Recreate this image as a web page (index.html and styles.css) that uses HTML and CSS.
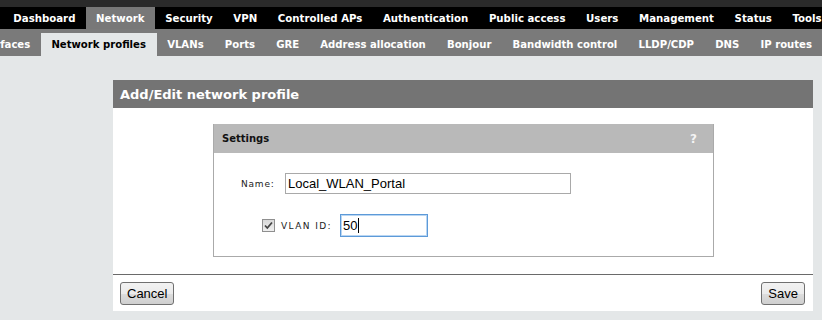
FILE: index.html
```html
<!DOCTYPE html>
<html>
<head>
<meta charset="utf-8">
<link rel="stylesheet" href="styles.css">
</head>
<body>
<div class="topstrip"></div>
<nav class="mainnav">
  <a class="item">Dashboard</a>
  <a class="item active">Network</a>
  <a class="item">Security</a>
  <a class="item">VPN</a>
  <a class="item">Controlled APs</a>
  <a class="item">Authentication</a>
  <a class="item">Public access</a>
  <a class="item">Users</a>
  <a class="item">Management</a>
  <a class="item">Status</a>
  <a class="item">Tools</a>
</nav>
<nav class="subnav">
  <div class="subtrack">
    <a class="sitem">Interfaces</a>
    <a class="sitem active">Network profiles</a>
    <a class="sitem">VLANs</a>
    <a class="sitem">Ports</a>
    <a class="sitem">GRE</a>
    <a class="sitem">Address allocation</a>
    <a class="sitem">Bonjour</a>
    <a class="sitem">Bandwidth control</a>
    <a class="sitem">LLDP/CDP</a>
    <a class="sitem">DNS</a>
    <a class="sitem">IP routes</a>
  </div>
</nav>
<main class="page">
  <section class="card">
    <header class="card-head">Add/Edit network profile</header>
    <div class="card-body">
      <div class="panel">
        <div class="panel-head"><span>Settings</span><span class="help">?</span></div>
        <div class="panel-body">
          <div class="row row-name">
            <label class="lbl">Name:</label>
            <div class="input input-name">Local_WLAN_Portal</div>
          </div>
          <div class="row row-vlan">
            <span class="check"><svg width="11" height="11" viewBox="0 0 11 11"><path d="M2 5.5 L4.3 8 L9 2.5" fill="none" stroke="#444" stroke-width="1.8"/></svg></span>
            <label class="lbl">VLAN ID:</label>
            <div class="input input-vlan">50<span class="caret"></span></div>
          </div>
        </div>
      </div>
    </div>
    <div class="card-foot">
      <button class="btn">Cancel</button>
      <button class="btn">Save</button>
    </div>
  </section>
</main>
</body>
</html>
```
FILE: styles.css
```css
* { box-sizing: border-box; }
html, body { margin: 0; padding: 0; }
body {
  background: #e4e7e8;
  font-family: "DejaVu Sans", Verdana, sans-serif;
  width: 822px;
  height: 320px;
  overflow: hidden;
}
.topstrip { height: 7px; background: #2a2a2a; }
.mainnav {
  display: flex;
  height: 22px;
  background: #000;
  padding-left: 3px;
  white-space: nowrap;
  overflow: hidden;
}
.mainnav .item {
  display: flex;
  align-items: center;
  padding: 0 10.3px;
  color: #fff;
  font-weight: bold;
  font-size: 10.2px;
}
.mainnav .item.active { background: #787878; }
.subnav {
  height: 27px;
  background: #7a7a7a;
  overflow: hidden;
}
.subtrack {
  display: flex;
  height: 100%;
  margin-left: -38px;
  padding-top: 4px;
  white-space: nowrap;
}
.sitem {
  display: flex;
  align-items: center;
  padding: 0 10.6px;
  color: #fff;
  font-weight: bold;
  font-size: 10.1px;
}
.sitem.active { background: #e4e7e8; color: #000; }
.page { padding: 24px 9px 0 113px; }
.card { width: 700px; background: #fff; }
.card-head {
  height: 28px;
  background: #747474;
  color: #fff;
  font-weight: bold;
  font-size: 13px;
  display: flex;
  align-items: center;
  padding-left: 7px;
}
.card-body { padding: 16px 99px 17px 100px; }
.panel { border: 1px solid #aaa; border-top: none; height: 133px; }
.panel-head {
  height: 29px;
  background: #b9b9b9;
  display: flex;
  align-items: center;
  justify-content: space-between;
  padding: 0 16px 0 8px;
  font-size: 10px;
  font-weight: bold;
  color: #111;
}
.help { color: #f4f4f4; font-size: 12px; }
.panel-body { padding-top: 20px; }
.row { display: flex; align-items: center; }
.row-name { padding-left: 27px; height: 21px; }
.row-vlan { padding-left: 48px; margin-top: 20px; height: 23px; }
.lbl {
  font-size: 9px;
  letter-spacing: 0.8px;
  color: #222;
}
.row-name .lbl { width: 44px; }
.row-vlan .lbl { width: 59px; letter-spacing: 1.4px; }
.input {
  font-family: "Liberation Sans", Arial, sans-serif;
  font-size: 13px;
  color: #000;
  display: flex;
  align-items: center;
  padding-left: 2px;
  background: #fff;
}
.input-name { width: 286px; height: 21px; border: 1px solid #a9a9a9; }
.input-vlan { width: 88px; height: 23px; border: 1px solid #5d9ad8; box-shadow: inset 0 0 0 1px #b9d6f3; }
.caret { display: inline-block; width: 1px; height: 15px; background: #000; margin-left: 1px; }
.check {
  width: 13px; height: 13px;
  border: 1px solid #8f8f8f;
  background: linear-gradient(#d8d8d8, #efefef);
  margin-right: 6px;
  display: flex;
  align-items: center;
  justify-content: center;
}
.card-foot {
  border-top: 1px solid #6a6a6a;
  display: flex;
  justify-content: space-between;
  padding: 7px 8px 6px 7px;
}
.btn {
  font-family: "Liberation Sans", Arial, sans-serif;
  font-size: 13px;
  height: 23px;
  padding: 0 6px;
  border: 1px solid #707070;
  border-radius: 3px;
  background: linear-gradient(#f2f2f2 0%, #ebebeb 50%, #dddddd 51%, #cfcfcf 100%);
  color: #000;
}
```
